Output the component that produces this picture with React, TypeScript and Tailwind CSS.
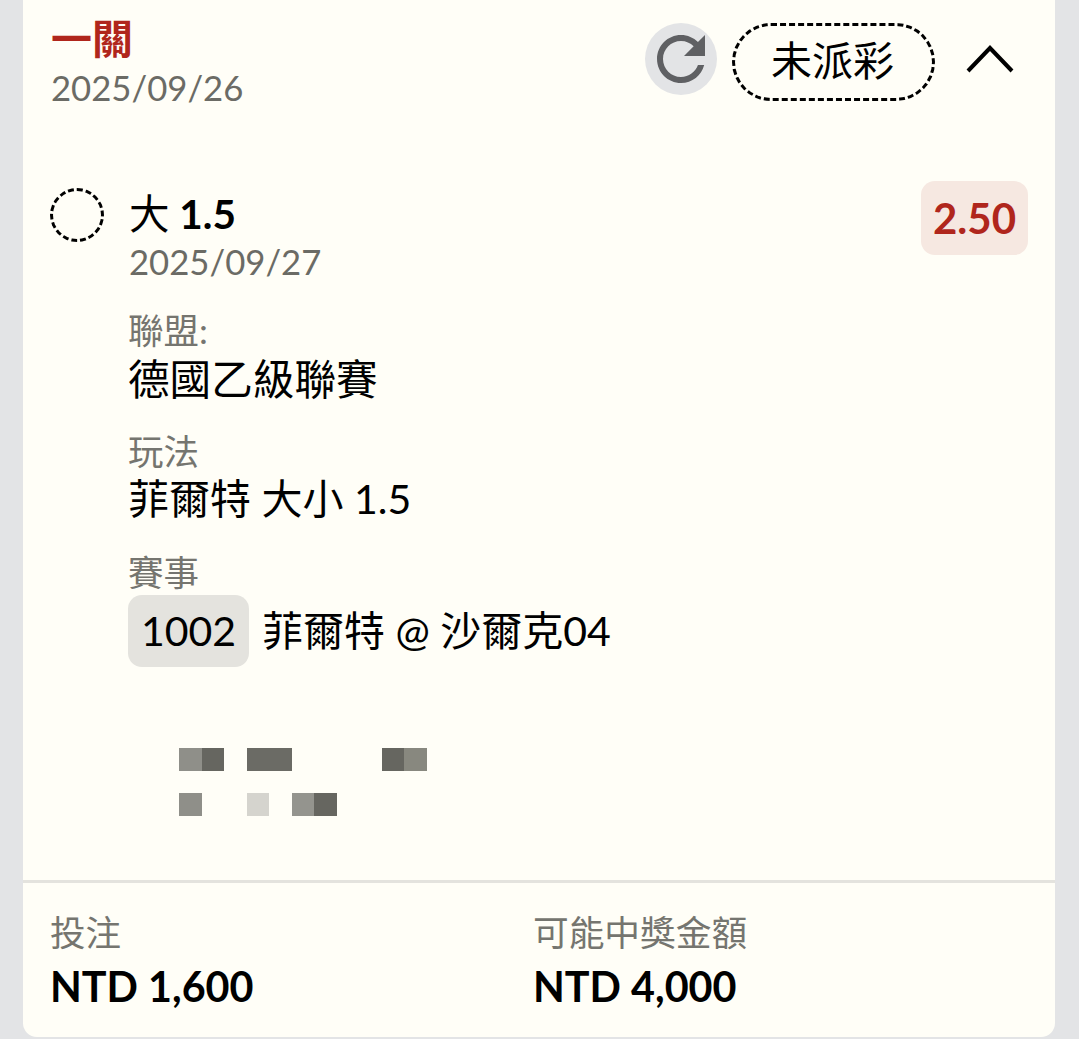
import React from 'react';

const pixelRows = [
  ['bg-[#8f8f89]', 'bg-[#666660]', '', 'bg-[#6b6b65]', 'bg-[#6b6b65]', '', '', '', '', 'bg-[#666660]', 'bg-[#88887f]'],
  ['bg-[#8f8f89]', '', '', 'bg-[#d5d4ce]', '', 'bg-[#94948e]', 'bg-[#666660]', '', '', '', ''],
];

function Field({ label, children }: { label: string; children: React.ReactNode }) {
  return (
    <div>
      <div className="text-[35.5px] leading-[44px] text-[#75756f]">{label}</div>
      {children}
    </div>
  );
}

export default function App() {
  return (
    <div
      className="h-[1039px] w-[1079px] overflow-hidden bg-[#e3e4e6] pl-[23px]"
      style={{ fontFamily: 'Lato, "Noto Sans CJK TC", sans-serif' }}
    >
      <div className="flex h-[1037px] w-[1032px] flex-col rounded-b-[14px] bg-[#fffef7] text-black">
        {/* Header */}
        <div className="flex items-start justify-between pl-[28px] pr-[41px] pt-[16px]">
          <div>
            <div className="-mt-[2px] mb-[2px] text-[41px] font-bold leading-[50px] text-[#b0261c]">一關</div>
            <div className="text-[34.7px] leading-[44px] text-[#6b6b65]">2025/09/26</div>
          </div>
          <div className="flex items-start pt-[7px]">
            <div className="flex h-[72px] w-[72px] items-center justify-center rounded-full bg-[#e3e4e6]">
              <svg width="72" height="72" viewBox="0 0 24 24" fill="#5f6063">
                <path d="M17.65 6.35C16.2 4.9 14.21 4 12 4c-4.42 0-7.99 3.58-7.99 8s3.57 8 7.99 8c3.73 0 6.84-2.55 7.73-6h-2.08c-.82 2.33-3.04 4-5.65 4-3.31 0-6-2.69-6-6s2.69-6 6-6c1.66 0 3.14.69 4.22 1.78L13 11h7V4l-2.35 2.35z" />
              </svg>
            </div>
            <div className="ml-[15px] flex h-[78px] w-[203px] items-center justify-center rounded-full border-[3px] border-dashed border-black pb-[2px] pr-[2px] text-[41px]">
              未派彩
            </div>
            <svg className="ml-[31px] mt-[22px]" width="48" height="28" viewBox="0 0 48 28" fill="none" stroke="#000" strokeWidth="4">
              <path d="M2 26 24 3l22 23" />
            </svg>
          </div>
        </div>

        {/* Selection */}
        <div className="flex items-start pl-[27px] pr-[27px] pt-[71px]">
          <div className="mt-[7px] h-[54px] w-[54px] shrink-0 rounded-full border-[3px] border-dashed border-black" />
          <div className="ml-[25px] flex-1 pt-[8px]">
            <div className="text-[40.5px] font-bold leading-[50px]">
              <span className="font-normal">大</span> 1.5
            </div>
            <div className="text-[34.7px] leading-[46px] text-[#6b6b65]">2025/09/27</div>
          </div>
          <div className="flex h-[74px] w-[107px] items-center justify-center rounded-[14px] bg-[#f6e8e1] text-[42px] font-bold text-[#b0261c]">
            2.50
          </div>
        </div>

        {/* Details */}
        <div className="flex flex-col gap-[25px] pl-[105px] pt-[24px]">
          <Field label="聯盟:">
            <div className="text-[41.6px] leading-[52px]">德國乙級聯賽</div>
          </Field>
          <Field label="玩法">
            <div className="-mt-[1px] text-[41px] leading-[52px]">菲爾特 大小 1.5</div>
          </Field>
          <div className="mt-[1px]">
            <Field label="賽事">
              <div className="flex items-center">
                <div className="flex h-[72px] w-[121px] items-center justify-center rounded-[14px] bg-[#e4e3de] text-[41px]">
                  1002
                </div>
                <div className="ml-[13px] text-[41px]">菲爾特 @ 沙爾克04</div>
              </div>
            </Field>
          </div>
        </div>

        {/* Pixelated name */}
        <div className="flex flex-col gap-[22px] pl-[156px] pt-[81px]">
          {pixelRows.map((row, i) => (
            <div key={i} className="flex h-[23px]">
              {row.map((c, j) => (
                <div key={j} className={`h-full w-[22.5px] ${c}`} />
              ))}
            </div>
          ))}
        </div>

        {/* Footer */}
        <div className="mt-auto flex h-[157px] border-t-[3px] border-[#e4e3de] pl-[27px] pt-[27px]">
          <div className="w-[483px]">
            <div className="text-[35.5px] leading-[46px] text-[#75756f]">投注</div>
            <div className="text-[41.3px] font-bold leading-[60px]">NTD 1,600</div>
          </div>
          <div>
            <div className="text-[35.7px] leading-[46px] text-[#75756f]">可能中獎金額</div>
            <div className="text-[41.3px] font-bold leading-[60px]">NTD 4,000</div>
          </div>
        </div>
      </div>
    </div>
  );
}
